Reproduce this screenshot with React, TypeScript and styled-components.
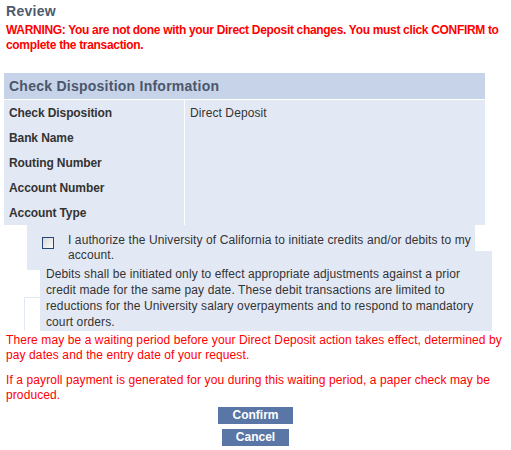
import React from "react";
import styled, { createGlobalStyle } from "styled-components";

const Global = createGlobalStyle`
  html, body { margin: 0; padding: 0; background: #ffffff; }
  body { font-family: "Liberation Sans", Arial, sans-serif; }
`;

const Page = styled.div`
  width: 511px;
  padding: 2px 4px 0 4px;
  box-sizing: border-box;
  font-family: "Liberation Sans", Arial, sans-serif;
  font-size: 12px;
  letter-spacing: 0.1px;
`;

const Title = styled.div`
  font-size: 14px;
  font-weight: bold;
  line-height: 18px;
  letter-spacing: 0.3px;
  color: #4f5a6e;
  padding-left: 2px;
`;

const Warning = styled.div`
  margin-top: 3px;
  font-size: 12px;
  font-weight: bold;
  line-height: 15px;
  letter-spacing: -0.32px;
  color: #ff0000;
  padding-left: 2px;
`;

const Table = styled.div`
  margin-top: 20px;
  width: 481px;
`;

const Header = styled.div`
  height: 26px;
  background: #c6d3e8;
  color: #4b566c;
  font-size: 14px;
  font-weight: bold;
  letter-spacing: 0.25px;
  line-height: 26px;
  padding-left: 5px;
  border-bottom: 1px solid #ffffff;
`;

const Body = styled.div`
  display: grid;
  grid-template-columns: 180px 1fr;
  column-gap: 1px;
  background: #ffffff;
`;

const Column = styled.div`
  background: #e3e9f4;
  display: flex;
  flex-direction: column;
`;

const Cell = styled.div<{ $bold?: boolean }>`
  height: 25px;
  line-height: 26px;
  padding-left: 5px;
  color: #333333;
  font-weight: ${(p) => (p.$bold ? "bold" : "normal")};
  letter-spacing: ${(p) => (p.$bold ? "-0.1px" : "0.1px")};
`;

const AuthRow = styled.div`
  position: relative;
  z-index: 1;
  margin-left: 23px;
  width: 448px;
  height: 26px;
  background: #e3e9f4;
  display: flex;
  align-items: flex-start;
  padding: 8px 0 0 15px;
  box-sizing: border-box;
`;

const Checkbox = styled.span`
  flex: none;
  width: 12px;
  height: 12px;
  box-sizing: border-box;
  border: 1px solid #27467a;
  background: linear-gradient(135deg, #d8d8d8, #fafafa);
  margin-top: 4px;
`;

const AuthText = styled.div`
  flex: 1;
  margin-left: 14px;
  line-height: 15px;
  color: #333333;
`;

const DebitRow = styled.div`
  display: flex;
  margin-left: 20px;
`;

const Notch = styled.div`
  width: 16px;
  height: 33px;
  margin-top: 46px;
  border-left: 1px solid #e3e9f4;
  border-top: 1px solid #e3e9f4;
  box-sizing: border-box;
  background: #ffffff;
`;

const DebitBlock = styled.div`
  display: flex;
  flex-direction: column;
`;

const Bridge = styled.div`
  margin-left: -13px;
  width: 13px;
  height: 19px;
  background: #e3e9f4;
`;

const DebitText = styled.div`
  width: 452px;
  margin-top: -19px;
  background: #e3e9f4;
  padding: 15px 6px 1px 6px;
  box-sizing: border-box;
  line-height: 16px;
  color: #333333;
`;

const Note = styled.p`
  margin: 0;
  padding-left: 2px;
  line-height: 15px;
  color: #ff0000;
  & + & {
    margin-top: 10px;
  }
`;

const Notes = styled.div`
  margin-top: 2px;
`;

const Buttons = styled.div`
  margin-top: 4px;
  display: flex;
  flex-direction: column;
  align-items: center;
  gap: 5px;
`;

const Button = styled.button<{ $w: number }>`
  width: ${(p) => p.$w}px;
  height: 17px;
  padding: 0;
  border: none;
  background: #5a76a6;
  color: #ffffff;
  font-family: "Liberation Sans", Arial, sans-serif;
  font-size: 12px;
  font-weight: bold;
  line-height: 17px;
  cursor: pointer;
`;

const rows = ["Check Disposition", "Bank Name", "Routing Number", "Account Number", "Account Type"];

export default function App() {
  return (
    <>
      <Global />
      <Page>
        <Title>Review</Title>
        <Warning>
          WARNING: You are not done with your Direct Deposit changes. You must click CONFIRM to complete the
          transaction.
        </Warning>
        <Table>
          <Header>Check Disposition Information</Header>
          <Body>
            <Column>
              {rows.map((r) => (
                <Cell key={r} $bold>
                  {r}
                </Cell>
              ))}
            </Column>
            <Column>
              <Cell>Direct Deposit</Cell>
            </Column>
          </Body>
        </Table>
        <AuthRow>
          <Checkbox />
          <AuthText>I authorize the University of California to initiate credits and/or debits to my account.</AuthText>
        </AuthRow>
        <DebitRow>
          <Notch />
          <DebitBlock>
            <Bridge />
            <DebitText>
              Debits shall be initiated only to effect appropriate adjustments against a prior credit made for the
              same pay date. These debit transactions are limited to reductions for the University salary
              overpayments and to respond to mandatory court orders.
            </DebitText>
          </DebitBlock>
        </DebitRow>
        <Notes>
          <Note>
            There may be a waiting period before your Direct Deposit action takes effect, determined by pay dates and
            the entry date of your request.
          </Note>
          <Note>If a payroll payment is generated for you during this waiting period, a paper check may be produced.</Note>
        </Notes>
        <Buttons>
          <Button $w={75}>Confirm</Button>
          <Button $w={67}>Cancel</Button>
        </Buttons>
      </Page>
    </>
  );
}
